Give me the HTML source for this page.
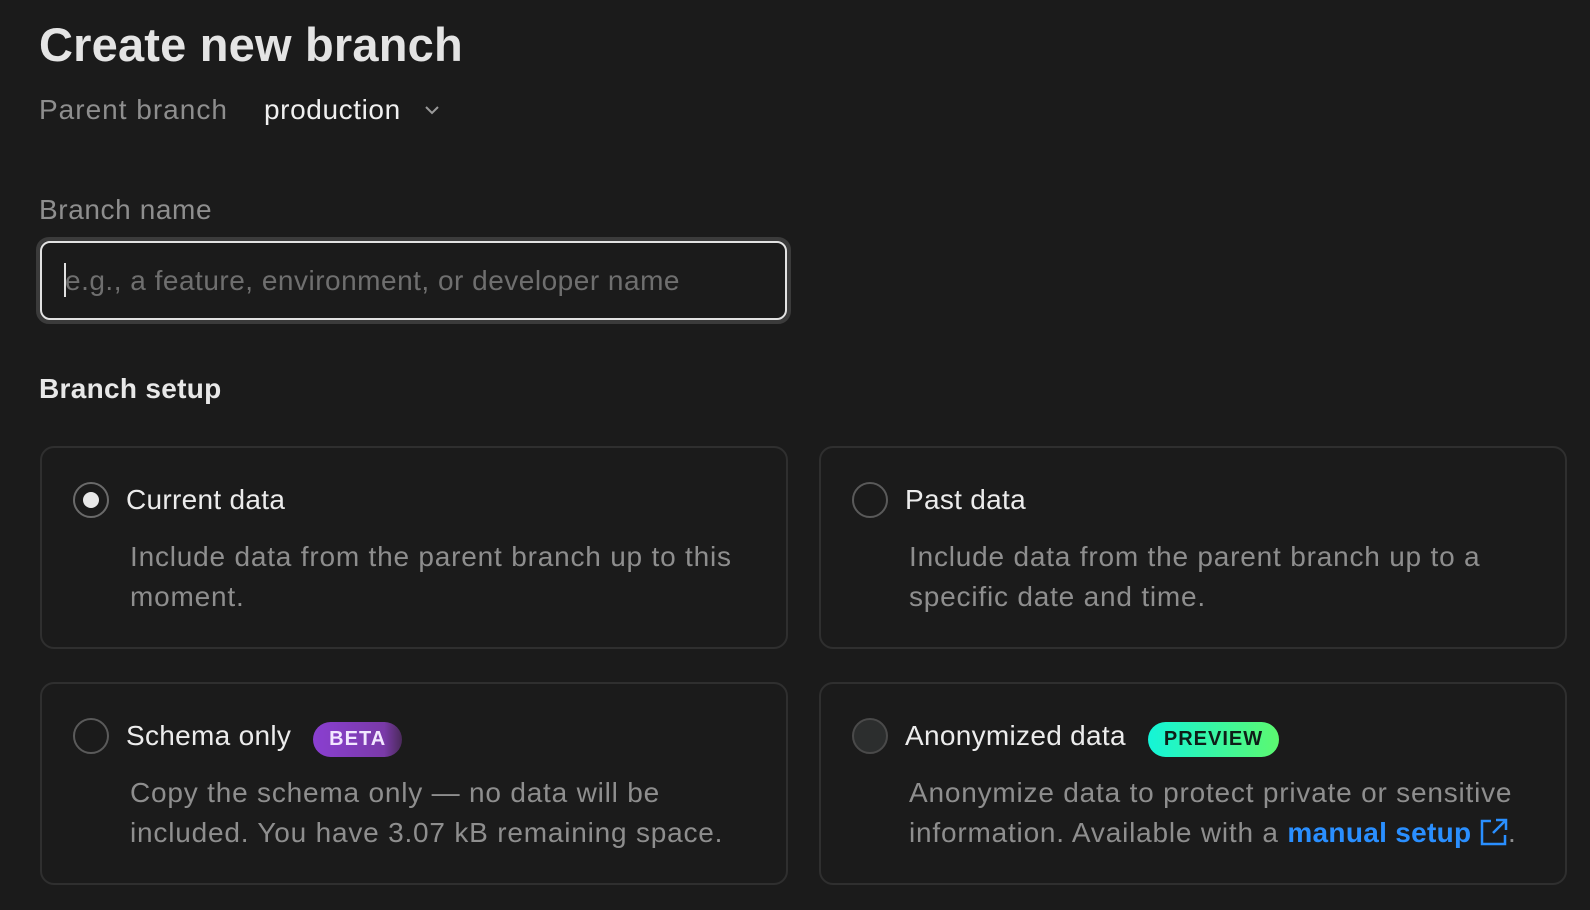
<!DOCTYPE html>
<html><head><meta charset="utf-8"><style>
*{box-sizing:border-box;margin:0;padding:0}
body{width:1590px;height:910px;background:#1b1b1b;font-family:"Liberation Sans",sans-serif;color:#e8e8e8;position:relative;overflow:hidden}
.a{position:absolute;white-space:nowrap}
h1{position:absolute;left:39px;top:17px;font-size:47px;font-weight:bold;color:#e4e4e4;letter-spacing:0.2px}
.muted{color:#8e8e8e}
.input{position:absolute;left:36px;top:237px;width:755px;height:87px;border:4px solid #3b3b3b;border-radius:13px}
.input .in{position:absolute;inset:0;border:2px solid #e2e2e2;border-radius:10px;background:#1b1b1b}
.card{position:absolute;width:748px;height:203px;border:2px solid #2f2f2f;border-radius:14px}
.radio{position:absolute;left:31px;top:34px;width:36px;height:36px;border-radius:50%;border:2px solid #5a5a5a}
.ct{position:absolute;left:84px;top:36px;font-size:28px;color:#ececec;letter-spacing:0.3px}
.cd{position:absolute;left:88px;top:89px;font-size:28px;line-height:40px;color:#8e8e8e;width:628px;letter-spacing:0.8px}
.badge{display:inline-block;vertical-align:middle;margin-left:22px;height:35px;line-height:35px;padding:0 16px;border-radius:18px;font-size:20px;font-weight:bold;letter-spacing:1px;position:relative;top:2px}
</style></head><body>
<h1>Create new branch</h1>
<div class="a muted" style="left:39px;top:94px;font-size:28px;letter-spacing:1px">Parent branch</div>
<div class="a" style="left:264px;top:94px;font-size:28px;color:#f0f0f0;letter-spacing:0.6px">production</div>
<svg class="a" style="left:424px;top:104px" width="16" height="12" viewBox="0 0 16 12"><path d="M2 3l6 6 6-6" fill="none" stroke="#9a9a9a" stroke-width="2"/></svg>
<div class="a muted" style="left:39px;top:194px;font-size:28px;letter-spacing:0.6px">Branch name</div>
<div class="input"><div class="in"></div>
<div class="a" style="left:24px;top:22px;width:2px;height:34px;background:#e0e0e0"></div>
<div class="a" style="left:25px;top:24px;font-size:28px;color:#6f6f6f;letter-spacing:0.5px">e.g., a feature, environment, or developer name</div></div>
<div class="a" style="left:39px;top:373px;font-size:28px;font-weight:bold;color:#e8e8e8;letter-spacing:0.3px">Branch setup</div>

<div class="card" style="left:40px;top:446px">
<div class="radio" style="border-color:#6a6a6a"><div style="position:absolute;left:8px;top:8px;width:16px;height:16px;border-radius:50%;background:#e8e8e8"></div></div>
<div class="ct">Current data</div>
<div class="cd">Include data from the parent branch up to this moment.</div></div>

<div class="card" style="left:819px;top:446px">
<div class="radio"></div>
<div class="ct">Past data</div>
<div class="cd">Include data from the parent branch up to a specific date and time.</div></div>

<div class="card" style="left:40px;top:682px">
<div class="radio"></div>
<div class="ct">Schema only<span class="badge" style="background:linear-gradient(90deg,#8a3fd1,#7a3aa8 80%,#4a2a5a);color:#f2e6ff">BETA</span></div>
<div class="cd">Copy the schema only — no data will be included. You have 3.07 kB remaining space.</div></div>

<div class="card" style="left:819px;top:682px">
<div class="radio" style="background:#2c2e2e;border-color:#4a4a4a"></div>
<div class="ct">Anonymized data<span class="badge" style="background:linear-gradient(90deg,#14f5d8,#5cf870);color:#0e1e18">PREVIEW</span></div>
<div class="cd">Anonymize data to protect private or sensitive information. Available with a <span style="color:#2a8fff;font-weight:bold;letter-spacing:0.3px">manual setup</span> <svg width="28" height="28" viewBox="0 0 28 28" style="vertical-align:-4px"><path d="M11 3H2v23h23v-9M16 2h10v10M26 2L13 15" fill="none" stroke="#2a8fff" stroke-width="2.5"/></svg>.</div></div>
</body></html>
